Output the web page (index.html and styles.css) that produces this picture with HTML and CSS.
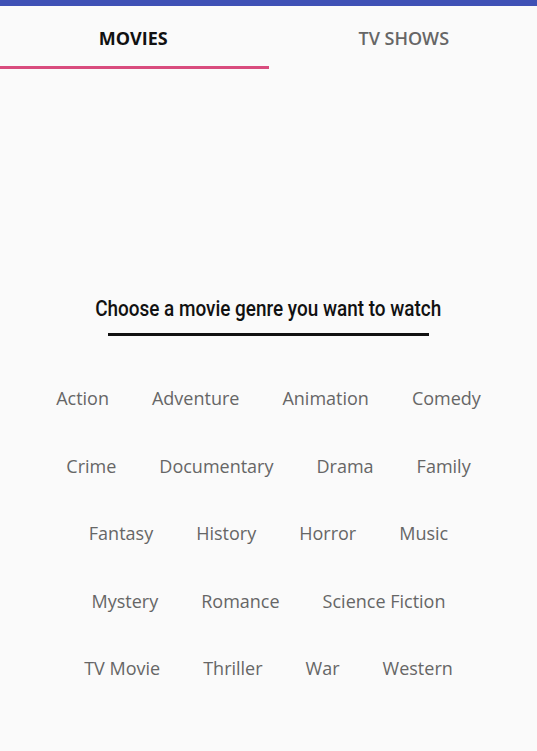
FILE: index.html
```html
<!DOCTYPE html>
<html>
<head>
<meta charset="utf-8">
<link rel="stylesheet" href="styles.css">
</head>
<body>
<div class="statusbar"></div>
<nav class="tabs">
  <div class="tab active">MOVIES</div>
  <div class="tab">TV SHOWS</div>
</nav>
<main class="content">
  <h1 class="title">Choose a movie genre you want to watch</h1>
  <div class="rule"></div>
  <ul class="genres">
    <li>Action</li><li>Adventure</li><li>Animation</li><li>Comedy</li>
    <li>Crime</li><li>Documentary</li><li>Drama</li><li>Family</li>
    <li>Fantasy</li><li>History</li><li>Horror</li><li>Music</li>
    <li>Mystery</li><li>Romance</li><li>Science Fiction</li>
    <li>TV Movie</li><li>Thriller</li><li>War</li><li>Western</li>
  </ul>
</main>
</body>
</html>
```
FILE: styles.css
```css
html, body {
  margin: 0;
  padding: 0;
  background: #fafafa;
  font-family: "Open Sans", "Noto Sans", sans-serif;
}
.statusbar {
  height: 6px;
  background: #3f51b5;
}
.tabs {
  display: flex;
  height: 63px;
}
.tab {
  width: 50%;
  box-sizing: border-box;
  display: flex;
  align-items: center;
  justify-content: center;
  font-size: 18px;
  font-weight: 600;
  color: #666;
  padding-top: 1px;
  padding-left: 2px;
}
.tab.active {
  color: #111;
  font-weight: 700;
  border-bottom: 3px solid #d94c7e;
  padding-top: 4px;
  padding-left: 0;
  padding-right: 2px;
}
.content {
  display: flex;
  flex-direction: column;
  align-items: center;
  padding-top: 226px;
}
.title {
  margin: 0;
  font-family: Roboto, "Liberation Sans", sans-serif;
  font-weight: 500;
  font-size: 22px;
  line-height: 28px;
  color: #111;
  white-space: nowrap;
  transform: scaleX(0.86);
}
.rule {
  width: 321px;
  height: 3px;
  background: #111;
  margin-top: 10px;
}
.genres {
  list-style: none;
  margin: 48px 0 0;
  padding: 0;
  width: 488px;
  display: flex;
  flex-wrap: wrap;
  justify-content: center;
  row-gap: 39px;
}
.genres li {
  padding: 0 21.5px;
  font-size: 18px;
  line-height: 28.5px;
  color: #666;
}
```
